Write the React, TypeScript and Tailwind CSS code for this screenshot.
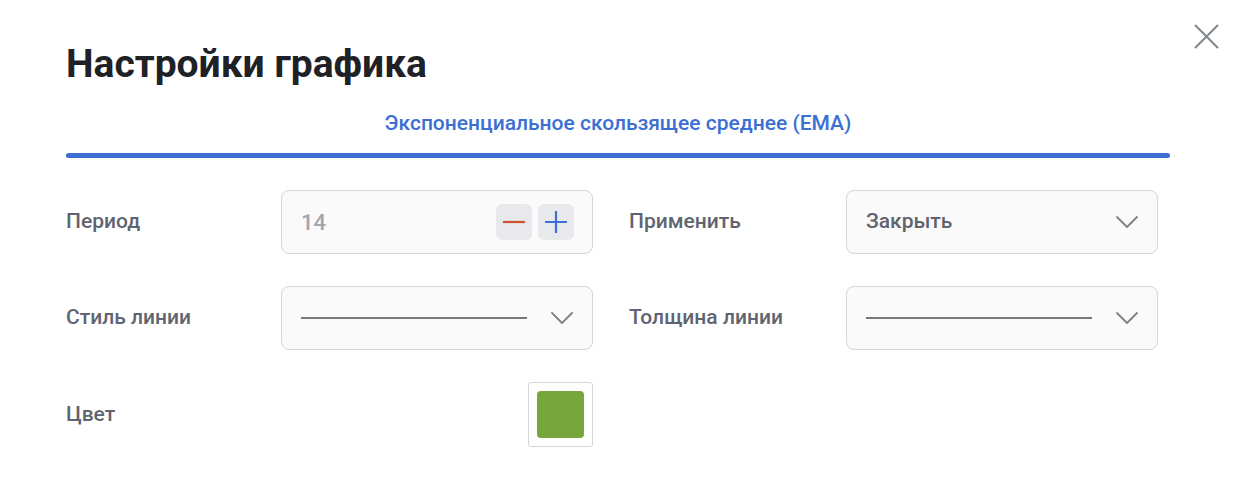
function Label({ children, w = 'w-[215px]' }: { children: React.ReactNode; w?: string }) {
  return <div className={`${w} shrink-0 text-[21px] font-medium text-[#5f6470]`}>{children}</div>
}

function Box({ children }: { children: React.ReactNode }) {
  return (
    <div className="flex h-[64px] w-[312px] items-center rounded-lg border border-[#d4d5d8] bg-[#fafafa] pl-[19px] pr-[19px]">
      {children}
    </div>
  )
}

function Chevron() {
  return (
    <svg className="ml-auto" width="22" height="12" viewBox="0 0 22 12" fill="none">
      <path d="M1 1L11 11L21 1" stroke="#7d818a" strokeWidth="1.8" strokeLinecap="round" strokeLinejoin="round" />
    </svg>
  )
}

function LineSelect() {
  return (
    <Box>
      <div className="h-[2px] w-[226px] bg-[#787878]" />
      <Chevron />
    </Box>
  )
}

export default function App() {
  return (
    <div className="relative h-[494px] w-[1242px] bg-white font-['Roboto',sans-serif]">
      {/* Close */}
      <button className="absolute left-[1194px] top-[24px]">
        <svg width="25" height="25" viewBox="0 0 25 25" fill="none">
          <path d="M1.5 1.5L23.5 23.5M23.5 1.5L1.5 23.5" stroke="#80868f" strokeWidth="2" strokeLinecap="round" />
        </svg>
      </button>

      <div className="px-[66px] pt-[38px]">
        <h1 className="text-[39px] font-bold leading-[52px] text-[#1e2126]">Настройки графика</h1>

        {/* Tab */}
        <div className="mt-[20px] w-[1104px]">
          <div className="text-center text-[21px] font-medium leading-[26px] text-[#3b6fd4]">
            Экспоненциальное скользящее среднее (EMA)
          </div>
          <div className="mt-[17px] h-[5px] rounded-full bg-[#3b6fd4]" />
        </div>

        {/* Fields */}
        <div className="mt-[32px] flex w-[1104px] flex-col gap-[32px]">
          <div className="flex items-center">
            <Label>Период</Label>
            <Box>
              <span className="text-[22px] font-medium text-[#a2a6ad]">14</span>
              <div className="ml-auto mr-[-1px] flex gap-[6px]">
                <div className="flex h-[36px] w-[36px] items-center justify-center rounded-md bg-[#e8e9ec]">
                  <svg width="22" height="22" viewBox="0 0 22 22">
                    <path d="M0 11H22" stroke="#d4502e" strokeWidth="2.2" />
                  </svg>
                </div>
                <div className="flex h-[36px] w-[36px] items-center justify-center rounded-md bg-[#e8e9ec]">
                  <svg width="22" height="22" viewBox="0 0 22 22">
                    <path d="M0 11H22M11 0V22" stroke="#3b6fd4" strokeWidth="2.2" />
                  </svg>
                </div>
              </div>
            </Box>
            <div className="ml-[36px] flex items-center">
              <Label w="w-[217px]">Применить</Label>
              <Box>
                <span className="text-[21px] font-medium text-[#5f6470]">Закрыть</span>
                <Chevron />
              </Box>
            </div>
          </div>

          <div className="flex items-center">
            <Label>Стиль линии</Label>
            <LineSelect />
            <div className="ml-[36px] flex items-center">
              <Label w="w-[217px]">Толщина линии</Label>
              <LineSelect />
            </div>
          </div>

          <div className="flex items-center">
            <Label>Цвет</Label>
            <div className="flex w-[312px] justify-end">
              <div className="flex h-[65px] w-[65px] items-center justify-center rounded-[3px] border border-[#d4d5d8] bg-white">
                <div className="h-[47px] w-[47px] rounded-[4px] bg-[#76a63c]" />
              </div>
            </div>
          </div>
        </div>
      </div>
    </div>
  )
}
